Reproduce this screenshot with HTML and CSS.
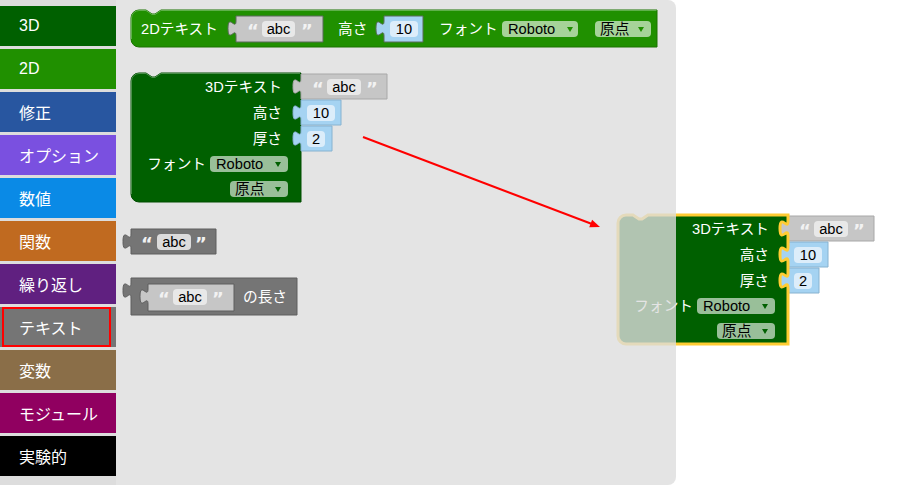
FILE: index.html
```html
<!DOCTYPE html>
<html lang="ja">
<head>
<meta charset="utf-8">
<title>Blocks</title>
<link rel="stylesheet" href="styles.css">
</head>
<body>
<div class="app">
  <nav class="toolbox">
    <div class="cat cat-3d">3D</div>
    <div class="cat cat-2d">2D</div>
    <div class="cat cat-mod">修正</div>
    <div class="cat cat-opt">オプション</div>
    <div class="cat cat-num">数値</div>
    <div class="cat cat-fn">関数</div>
    <div class="cat cat-loop">繰り返し</div>
    <div class="cat cat-text selected">テキスト</div>
    <div class="cat cat-var">変数</div>
    <div class="cat cat-module">モジュール</div>
    <div class="cat cat-exp">実験的</div>
  </nav>
  <div class="workspace">
    <svg class="canvas" width="799" height="485" viewBox="116 0 799 485" xmlns="http://www.w3.org/2000/svg">
      <!-- dragged block (below the flyout) -->
      <g transform="translate(487,142)">
        <path class="blk g3" d="M131,81 a8,8 0 0 1 8,-8 H146 l6,4 h3 l6,-4 H301 V79 c0,10 -8,-8 -8,7.5 s8,-2.5 8,7.5 V105 c0,10 -8,-8 -8,7.5 s8,-2.5 8,7.5 V131 c0,10 -8,-8 -8,7.5 s8,-2.5 8,7.5 V202 H139 a8,8 0 0 1 -8,-8 Z"/>
        <text class="lbl" x="282" y="92" text-anchor="end">3Dテキスト</text>
        <text class="lbl" x="282" y="118" text-anchor="end">高さ</text>
        <text class="lbl" x="282" y="144" text-anchor="end">厚さ</text>
        <text class="lbl" x="206" y="169" text-anchor="end">フォント</text>
        <rect class="pill p3" x="210" y="156" width="78" height="16" rx="4"/>
        <text class="val" x="216" y="169">Roboto</text>
        <path class="arr3" d="M275,162 h6 l-3,5 z"/>
        <rect class="pill p3" x="230" y="181" width="58" height="16" rx="4"/>
        <text class="val" x="235" y="194">原点</text>
        <path class="arr3" d="M275,187 h6 l-3,5 z"/>
        <path class="blk gin" d="M301,74 H387 V99 H301 V94 c0,-10 -8,8 -8,-7.5 s8,2.5 8,-7.5 Z"/>
        <text class="quote" x="312" y="94.5">“</text>
        <rect class="pill pin" x="327" y="79" width="34" height="16" rx="4"/>
        <text class="val" x="344" y="92" text-anchor="middle">abc</text>
        <text class="quote" x="366" y="94.5">”</text>
        <path class="blk gnum" d="M301,100 H341 V125 H301 V120 c0,-10 -8,8 -8,-7.5 s8,2.5 8,-7.5 Z"/>
        <rect class="pill pnum" x="307" y="105" width="28" height="16" rx="4"/>
        <text class="val" x="321" y="118" text-anchor="middle">10</text>
        <path class="blk gnum" d="M301,126 H332 V151 H301 V146 c0,-10 -8,8 -8,-7.5 s8,2.5 8,-7.5 Z"/>
        <rect class="pill pnum" x="307" y="131" width="18" height="16" rx="4"/>
        <text class="val" x="316" y="144" text-anchor="middle">2</text>
        <path class="sel" d="M131,81 a8,8 0 0 1 8,-8 H146 l6,4 h3 l6,-4 H301 V79 c0,10 -8,-8 -8,7.5 s8,-2.5 8,7.5 V105 c0,10 -8,-8 -8,7.5 s8,-2.5 8,7.5 V131 c0,10 -8,-8 -8,7.5 s8,-2.5 8,7.5 V202 H139 a8,8 0 0 1 -8,-8 Z"/>
      </g>

      <!-- flyout background -->
      <path class="flyout" d="M116,0 H668 a8,8 0 0 1 8,8 V477 a8,8 0 0 1 -8,8 H116 Z"/>

      <!-- 2D text block -->
      <g>
        <path class="blk g2" d="M131,18 a8,8 0 0 1 8,-8 H146 l6,4 h3 l6,-4 H657 V47 H139 a8,8 0 0 1 -8,-8 Z"/>
        <path class="hl hl2" d="M131.5,39 V18 a7.5,7.5 0 0 1 7.5,-7.5 H146 l6,4 h3 l6,-4 H656.5"/>
        <text class="lbl" x="141" y="34">2Dテキスト</text>
        <path class="blk gin hole" d="M236,16 H323 V42 H236 V36 c0,-10 -8,8 -8,-7.5 s8,2.5 8,-7.5 Z"/>
        <text class="quote" x="247" y="36.5">“</text>
        <rect class="pill pin" x="262" y="21" width="33" height="16" rx="4"/>
        <text class="val" x="278.5" y="34" text-anchor="middle">abc</text>
        <text class="quote" x="301" y="36.5">”</text>
        <text class="lbl" x="338" y="34">高さ</text>
        <path class="blk gnum hole" d="M384,16 H423 V42 H384 V36 c0,-10 -8,8 -8,-7.5 s8,2.5 8,-7.5 Z"/>
        <rect class="pill pnum" x="390" y="21" width="28" height="16" rx="4"/>
        <text class="val" x="404" y="34" text-anchor="middle">10</text>
        <text class="lbl" x="439" y="34">フォント</text>
        <rect class="pill p2" x="502" y="21" width="76" height="16" rx="4"/>
        <text class="val" x="508" y="34">Roboto</text>
        <path class="arr2" d="M567,27 h6 l-3,5 z"/>
        <rect class="pill p2" x="595" y="21" width="56" height="16" rx="4"/>
        <text class="val" x="600" y="34">原点</text>
        <path class="arr2" d="M638,27 h6 l-3,5 z"/>
      </g>

      <!-- 3D text block -->
      <g>
        <path class="blk g3" d="M131,81 a8,8 0 0 1 8,-8 H146 l6,4 h3 l6,-4 H301 V79 c0,10 -8,-8 -8,7.5 s8,-2.5 8,7.5 V105 c0,10 -8,-8 -8,7.5 s8,-2.5 8,7.5 V131 c0,10 -8,-8 -8,7.5 s8,-2.5 8,7.5 V202 H139 a8,8 0 0 1 -8,-8 Z"/>
        <path class="hl hl3" d="M131.5,194 V81 a7.5,7.5 0 0 1 7.5,-7.5 H146 l6,4 h3 l6,-4 H300"/>
        <text class="lbl" x="282" y="92" text-anchor="end">3Dテキスト</text>
        <text class="lbl" x="282" y="118" text-anchor="end">高さ</text>
        <text class="lbl" x="282" y="144" text-anchor="end">厚さ</text>
        <text class="lbl" x="206" y="169" text-anchor="end">フォント</text>
        <rect class="pill p3" x="210" y="156" width="78" height="16" rx="4"/>
        <text class="val" x="216" y="169">Roboto</text>
        <path class="arr3" d="M275,162 h6 l-3,5 z"/>
        <rect class="pill p3" x="230" y="181" width="58" height="16" rx="4"/>
        <text class="val" x="235" y="194">原点</text>
        <path class="arr3" d="M275,187 h6 l-3,5 z"/>
        <path class="blk gin" d="M301,74 H387 V99 H301 V94 c0,-10 -8,8 -8,-7.5 s8,2.5 8,-7.5 Z"/>
        <text class="quote" x="312" y="94.5">“</text>
        <rect class="pill pin" x="327" y="79" width="34" height="16" rx="4"/>
        <text class="val" x="344" y="92" text-anchor="middle">abc</text>
        <text class="quote" x="366" y="94.5">”</text>
        <path class="blk gnum" d="M301,100 H341 V125 H301 V120 c0,-10 -8,8 -8,-7.5 s8,2.5 8,-7.5 Z"/>
        <rect class="pill pnum" x="307" y="105" width="28" height="16" rx="4"/>
        <text class="val" x="321" y="118" text-anchor="middle">10</text>
        <path class="blk gnum" d="M301,126 H332 V151 H301 V146 c0,-10 -8,8 -8,-7.5 s8,2.5 8,-7.5 Z"/>
        <rect class="pill pnum" x="307" y="131" width="18" height="16" rx="4"/>
        <text class="val" x="316" y="144" text-anchor="middle">2</text>
      </g>

      <!-- text value block -->
      <g>
        <path class="blk gtx" d="M131,229 H216 V254 H131 V249 c0,-10 -8,8 -8,-7.5 s8,2.5 8,-7.5 Z"/>
        <text class="quote" x="141" y="249.5">“</text>
        <rect class="pill ptx" x="157" y="234" width="34" height="16" rx="4"/>
        <text class="val" x="174" y="247" text-anchor="middle">abc</text>
        <text class="quote" x="195" y="249.5">”</text>
      </g>

      <!-- length block -->
      <g>
        <path class="blk gtx" d="M131,278 H297 V315 H131 V298 c0,-10 -8,8 -8,-7.5 s8,2.5 8,-7.5 Z"/>
        <path class="blk gin hole hole-tx" d="M148,284 H234 V311 H148 V304 c0,-10 -8,8 -8,-7.5 s8,2.5 8,-7.5 Z"/>
        <text class="quote" x="158" y="304.5">“</text>
        <rect class="pill pin" x="173" y="289" width="34" height="16" rx="4"/>
        <text class="val" x="190" y="302" text-anchor="middle">abc</text>
        <text class="quote" x="212" y="304.5">”</text>
        <text class="lbl" x="243" y="302">の長さ</text>
      </g>

      <!-- red annotation arrow -->
      <line class="arrow-line" x1="363" y1="137" x2="592" y2="224"/>
      <polygon class="arrow-head" points="600,227 592.1,219.7 589.2,227.2"/>
    </svg>
  </div>
</div>
</body>
</html>
```

FILE: styles.css
```css
html, body {
  margin: 0;
  padding: 0;
  background: #ffffff;
}

body {
  font-family: "Liberation Sans", "Noto Sans CJK JP", sans-serif;
  width: 915px;
  height: 485px;
  overflow: hidden;
}

.app {
  display: flex;
  height: 485px;
}

.toolbox {
  width: 116px;
  flex: none;
  background: #dddddd;
  padding-top: 6px;
  display: flex;
  flex-direction: column;
  gap: 3px;
  box-sizing: border-box;
}

.cat {
  position: relative;
  height: 40px;
  display: flex;
  align-items: center;
  padding-left: 19px;
  padding-bottom: 1px;
  box-sizing: border-box;
  color: #ffffff;
  font-family: "Liberation Sans", "Noto Sans CJK JP", sans-serif;
  font-size: 16px;
  flex: none;
}

.cat-3d { background: #006000; }
.cat-2d { background: #209000; }
.cat-mod { background: #2856a0; }
.cat-opt { background: #7a50e0; }
.cat-num { background: #0a8ae6; }
.cat-fn { background: #c06a20; }
.cat-loop { background: #602080; }
.cat-text { background: #757575; }
.cat-var { background: #8a6e48; }
.cat-module { background: #900060; }
.cat-exp { background: #000000; }

.cat.selected::after {
  content: "";
  position: absolute;
  left: 2px;
  top: 0;
  width: 109px;
  height: 40px;
  border: 2px solid #ff0000;
  box-sizing: border-box;
}

.workspace {
  flex: 1;
  position: relative;
  background: #ffffff;
}

.canvas {
  display: block;
}

.canvas text {
  font-family: "Liberation Sans", "Noto Sans CJK JP", sans-serif;
  font-size: 14.67px;
}

.flyout {
  fill: #dddddd;
  fill-opacity: 0.8;
}

.blk { stroke-width: 1; }
.g2 { fill: #209000; stroke: #1a7300; }
.g3 { fill: #006000; stroke: #004d00; }
.gin { fill: #c6c6c6; stroke: #a8a8a8; }
.gnum { fill: #a5d3f2; stroke: #86b2d0; }
.gtx { fill: #757575; stroke: #5e5e5e; }

.hole { stroke: #5a6a5a; }
.hole-tx { stroke: #5e5e5e; }

.hl { fill: none; stroke-width: 1; }
.hl2 { stroke: #5fb04a; }
.hl3 { stroke: #4a8e4a; }

.sel {
  fill: none;
  stroke: #ffcc33;
  stroke-width: 3;
}

.pill { stroke: none; }
.p2 { fill: #a6d399; }
.p3 { fill: #99bf99; }
.pin { fill: #e8e8e8; }
.pnum { fill: #dcedfa; }
.ptx { fill: #dcdcdc; }

.lbl { fill: #ffffff; }
.val { fill: #000000; }

.canvas .quote {
  fill: #f2f2f2;
  font-family: "DejaVu Sans", sans-serif;
  font-weight: bold;
  font-size: 18px;
}

.arr2 { fill: #209000; }
.arr3 { fill: #006000; }

.arrow-line {
  stroke: #ff0000;
  stroke-width: 2;
}

.arrow-head {
  fill: #ff0000;
}
```
